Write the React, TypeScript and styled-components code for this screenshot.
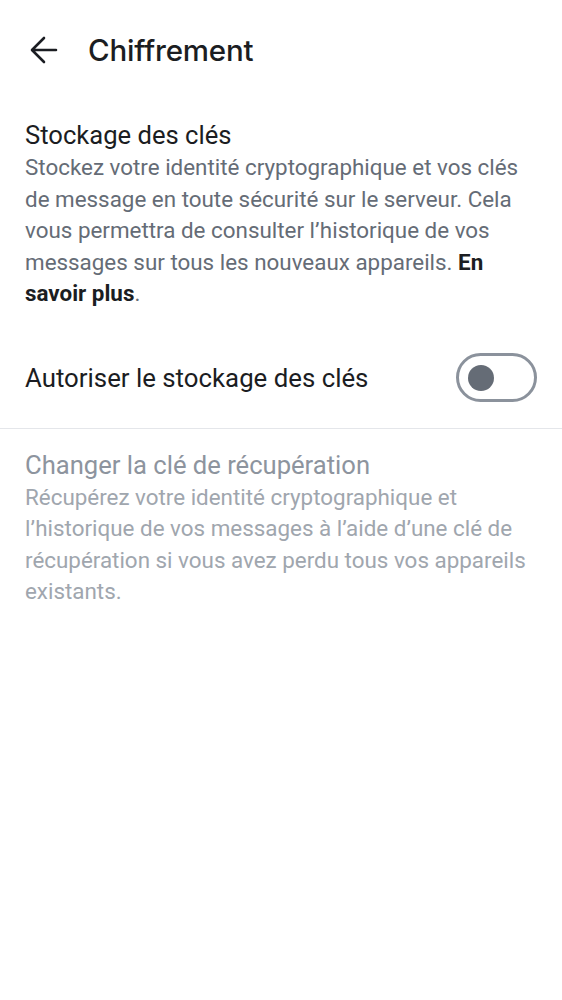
import React from 'react';
import styled, { createGlobalStyle } from 'styled-components';

const GlobalStyle = createGlobalStyle`
    html, body {
        margin: 0;
        padding: 0;
        background: #ffffff;
    }
    body {
        font-family: Roboto, 'Liberation Sans', sans-serif;
        -webkit-font-smoothing: antialiased;
    }
`;

const Screen = styled.div`
    width: 562px;
    min-height: 1000px;
    background: #ffffff;
    display: flex;
    flex-direction: column;
`;

const TopBar = styled.header`
    height: 100px;
    display: flex;
    align-items: center;
    padding-left: 30px;
    gap: 30px;
`;

const BackButton = styled.button`
    width: 28px;
    height: 28px;
    padding: 0;
    border: none;
    background: none;
    display: flex;
    align-items: center;
    justify-content: center;
    cursor: pointer;
`;

const Title = styled.h1`
    margin: 0;
    font-family: Inter, 'Noto Sans', sans-serif;
    font-size: 29.5px;
    font-weight: 500;
    color: #1b1d22;
    letter-spacing: -0.2px;
`;

const Section = styled.section<{ $top?: number }>`
    padding: 0 25px;
    margin-top: ${(p) => p.$top ?? 0}px;
    display: flex;
    flex-direction: column;
`;

const SectionTitle = styled.h2<{ $disabled?: boolean }>`
    margin: 0;
    font-size: 25.6px;
    font-weight: 400;
    line-height: 34px;
    color: ${(p) => (p.$disabled ? '#8d949e' : '#1b1d22')};
`;

const SectionText = styled.p<{ $disabled?: boolean }>`
    margin: 0;
    font-size: 22.4px;
    font-weight: 400;
    line-height: 31.5px;
    color: ${(p) => (p.$disabled ? '#a0a6ae' : '#656c76')};
`;

const Strong = styled.a`
    font-weight: 700;
    color: #1b1d22;
    text-decoration: none;
`;

const ToggleRow = styled.label`
    display: flex;
    align-items: center;
    justify-content: space-between;
    padding: 0 25px;
    margin-top: 43px;
    height: 50px;
    font-size: 25.8px;
    color: #1b1d22;
`;

const Switch = styled.span<{ $on: boolean }>`
    box-sizing: border-box;
    width: 81px;
    height: 49px;
    border-radius: 25px;
    border: 3px solid #8b929c;
    display: flex;
    align-items: center;
    justify-content: ${(p) => (p.$on ? 'flex-end' : 'flex-start')};
    padding: 0 9px;
    cursor: pointer;
`;

const Knob = styled.span`
    width: 26px;
    height: 26px;
    border-radius: 50%;
    background: #656c76;
`;

const Divider = styled.hr`
    margin: 25px 0 0;
    border: none;
    border-top: 1px solid #e4e6ea;
`;

const ArrowLeft = () => (
    <svg width="28" height="28" viewBox="0 0 28 28" fill="none">
        <path
            d="M26 14H3M14 2L2 14l12 12"
            stroke="#1b1d22"
            strokeWidth="2.6"
            strokeLinecap="round"
            strokeLinejoin="round"
        />
    </svg>
);

export default function App() {
    const [enabled, setEnabled] = React.useState(false);

    return (
        <Screen>
            <GlobalStyle />
            <TopBar>
                <BackButton aria-label="Retour">
                    <ArrowLeft />
                </BackButton>
                <Title>Chiffrement</Title>
            </TopBar>

            <Section $top={18}>
                <SectionTitle>Stockage des clés</SectionTitle>
                <SectionText>
                    Stockez votre identité cryptographique et vos clés de message en toute sécurité sur le
                    serveur. Cela vous permettra de consulter l’historique de vos messages sur tous les
                    nouveaux appareils. <Strong href="#">En savoir plus</Strong>.
                </SectionText>
            </Section>

            <ToggleRow>
                Autoriser le stockage des clés
                <Switch $on={enabled} onClick={() => setEnabled(!enabled)}>
                    <Knob />
                </Switch>
            </ToggleRow>

            <Divider />

            <Section $top={19}>
                <SectionTitle $disabled>Changer la clé de récupération</SectionTitle>
                <SectionText $disabled>
                    Récupérez votre identité cryptographique et l’historique de vos messages à l’aide d’une
                    clé de récupération si vous avez perdu tous vos appareils existants.
                </SectionText>
            </Section>
        </Screen>
    );
}
